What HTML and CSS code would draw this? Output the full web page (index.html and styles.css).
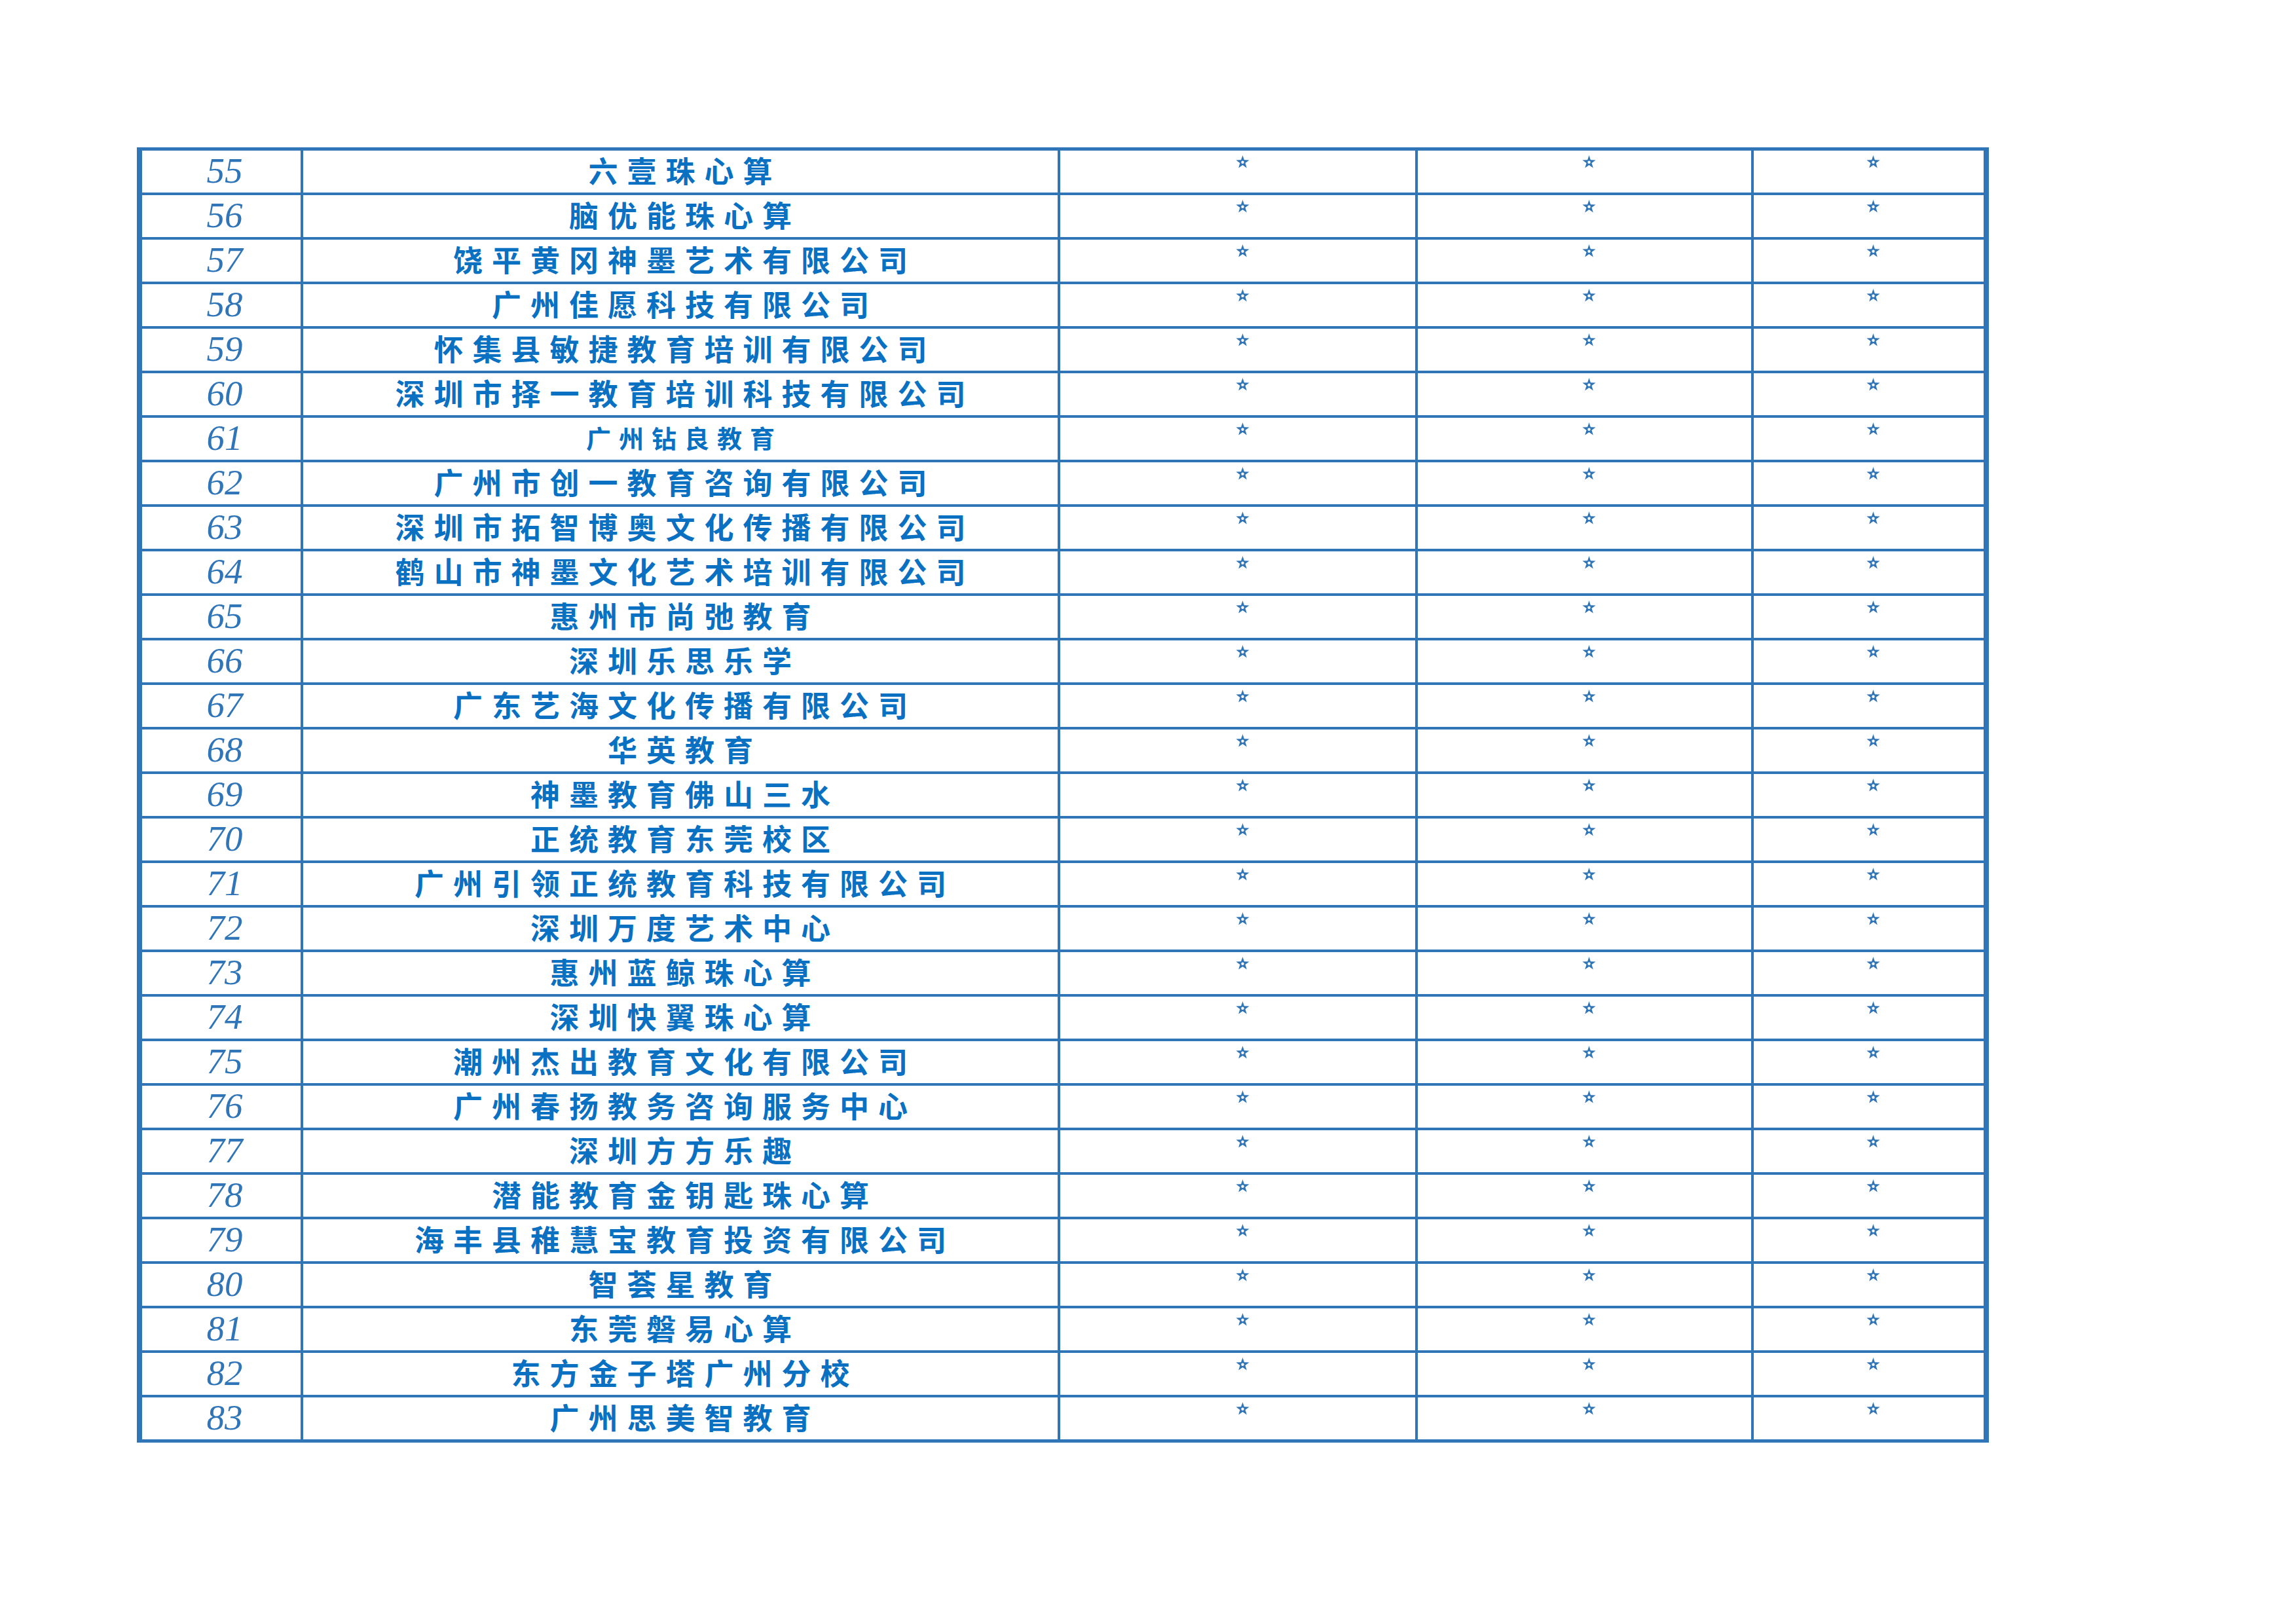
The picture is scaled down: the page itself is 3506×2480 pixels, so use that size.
FILE: index.html
```html
<!DOCTYPE html>
<html lang="zh-CN">
<head>
<meta charset="utf-8">
<title>名单</title>
<link rel="stylesheet" href="styles.css">
</head>
<body>
<svg class="defs" width="0" height="0" aria-hidden="true">
  <symbol id="star" viewBox="0 0 21 20">
    <path fill-rule="evenodd" d="M10.5 0.2 L12.9 7.2 L20.6 7.4 L14.5 12 L16.8 19.6 L10.5 15 L4.2 19.6 L6.5 12 L0.4 7.4 L8.1 7.2 Z M10.5 8.6 A2.2 2.2 0 1 0 10.5 13 A2.2 2.2 0 1 0 10.5 8.6 Z"/>
  </symbol>
</svg>
<div class="page">
<table class="list">
  <colgroup>
    <col class="c-no"><col class="c-name"><col class="c-a"><col class="c-b"><col class="c-c">
  </colgroup>
  <tbody>
    <tr><td class="no">55</td><td class="name">六壹珠心算</td><td class="mark"><svg class="star"><use href="#star"/></svg></td><td class="mark"><svg class="star"><use href="#star"/></svg></td><td class="mark"><svg class="star"><use href="#star"/></svg></td></tr>
    <tr><td class="no">56</td><td class="name">脑优能珠心算</td><td class="mark"><svg class="star"><use href="#star"/></svg></td><td class="mark"><svg class="star"><use href="#star"/></svg></td><td class="mark"><svg class="star"><use href="#star"/></svg></td></tr>
    <tr><td class="no">57</td><td class="name">饶平黄冈神墨艺术有限公司</td><td class="mark"><svg class="star"><use href="#star"/></svg></td><td class="mark"><svg class="star"><use href="#star"/></svg></td><td class="mark"><svg class="star"><use href="#star"/></svg></td></tr>
    <tr><td class="no">58</td><td class="name">广州佳愿科技有限公司</td><td class="mark"><svg class="star"><use href="#star"/></svg></td><td class="mark"><svg class="star"><use href="#star"/></svg></td><td class="mark"><svg class="star"><use href="#star"/></svg></td></tr>
    <tr><td class="no">59</td><td class="name">怀集县敏捷教育培训有限公司</td><td class="mark"><svg class="star"><use href="#star"/></svg></td><td class="mark"><svg class="star"><use href="#star"/></svg></td><td class="mark"><svg class="star"><use href="#star"/></svg></td></tr>
    <tr><td class="no">60</td><td class="name">深圳市择一教育培训科技有限公司</td><td class="mark"><svg class="star"><use href="#star"/></svg></td><td class="mark"><svg class="star"><use href="#star"/></svg></td><td class="mark"><svg class="star"><use href="#star"/></svg></td></tr>
    <tr><td class="no">61</td><td class="name small">广州钻良教育</td><td class="mark"><svg class="star"><use href="#star"/></svg></td><td class="mark"><svg class="star"><use href="#star"/></svg></td><td class="mark"><svg class="star"><use href="#star"/></svg></td></tr>
    <tr><td class="no">62</td><td class="name">广州市创一教育咨询有限公司</td><td class="mark"><svg class="star"><use href="#star"/></svg></td><td class="mark"><svg class="star"><use href="#star"/></svg></td><td class="mark"><svg class="star"><use href="#star"/></svg></td></tr>
    <tr><td class="no">63</td><td class="name">深圳市拓智博奥文化传播有限公司</td><td class="mark"><svg class="star"><use href="#star"/></svg></td><td class="mark"><svg class="star"><use href="#star"/></svg></td><td class="mark"><svg class="star"><use href="#star"/></svg></td></tr>
    <tr><td class="no">64</td><td class="name">鹤山市神墨文化艺术培训有限公司</td><td class="mark"><svg class="star"><use href="#star"/></svg></td><td class="mark"><svg class="star"><use href="#star"/></svg></td><td class="mark"><svg class="star"><use href="#star"/></svg></td></tr>
    <tr><td class="no">65</td><td class="name">惠州市尚弛教育</td><td class="mark"><svg class="star"><use href="#star"/></svg></td><td class="mark"><svg class="star"><use href="#star"/></svg></td><td class="mark"><svg class="star"><use href="#star"/></svg></td></tr>
    <tr><td class="no">66</td><td class="name">深圳乐思乐学</td><td class="mark"><svg class="star"><use href="#star"/></svg></td><td class="mark"><svg class="star"><use href="#star"/></svg></td><td class="mark"><svg class="star"><use href="#star"/></svg></td></tr>
    <tr><td class="no">67</td><td class="name">广东艺海文化传播有限公司</td><td class="mark"><svg class="star"><use href="#star"/></svg></td><td class="mark"><svg class="star"><use href="#star"/></svg></td><td class="mark"><svg class="star"><use href="#star"/></svg></td></tr>
    <tr><td class="no">68</td><td class="name">华英教育</td><td class="mark"><svg class="star"><use href="#star"/></svg></td><td class="mark"><svg class="star"><use href="#star"/></svg></td><td class="mark"><svg class="star"><use href="#star"/></svg></td></tr>
    <tr><td class="no">69</td><td class="name">神墨教育佛山三水</td><td class="mark"><svg class="star"><use href="#star"/></svg></td><td class="mark"><svg class="star"><use href="#star"/></svg></td><td class="mark"><svg class="star"><use href="#star"/></svg></td></tr>
    <tr><td class="no">70</td><td class="name">正统教育东莞校区</td><td class="mark"><svg class="star"><use href="#star"/></svg></td><td class="mark"><svg class="star"><use href="#star"/></svg></td><td class="mark"><svg class="star"><use href="#star"/></svg></td></tr>
    <tr><td class="no">71</td><td class="name">广州引领正统教育科技有限公司</td><td class="mark"><svg class="star"><use href="#star"/></svg></td><td class="mark"><svg class="star"><use href="#star"/></svg></td><td class="mark"><svg class="star"><use href="#star"/></svg></td></tr>
    <tr><td class="no">72</td><td class="name">深圳万度艺术中心</td><td class="mark"><svg class="star"><use href="#star"/></svg></td><td class="mark"><svg class="star"><use href="#star"/></svg></td><td class="mark"><svg class="star"><use href="#star"/></svg></td></tr>
    <tr><td class="no">73</td><td class="name">惠州蓝鲸珠心算</td><td class="mark"><svg class="star"><use href="#star"/></svg></td><td class="mark"><svg class="star"><use href="#star"/></svg></td><td class="mark"><svg class="star"><use href="#star"/></svg></td></tr>
    <tr><td class="no">74</td><td class="name">深圳快翼珠心算</td><td class="mark"><svg class="star"><use href="#star"/></svg></td><td class="mark"><svg class="star"><use href="#star"/></svg></td><td class="mark"><svg class="star"><use href="#star"/></svg></td></tr>
    <tr><td class="no">75</td><td class="name">潮州杰出教育文化有限公司</td><td class="mark"><svg class="star"><use href="#star"/></svg></td><td class="mark"><svg class="star"><use href="#star"/></svg></td><td class="mark"><svg class="star"><use href="#star"/></svg></td></tr>
    <tr><td class="no">76</td><td class="name">广州春扬教务咨询服务中心</td><td class="mark"><svg class="star"><use href="#star"/></svg></td><td class="mark"><svg class="star"><use href="#star"/></svg></td><td class="mark"><svg class="star"><use href="#star"/></svg></td></tr>
    <tr><td class="no">77</td><td class="name">深圳方方乐趣</td><td class="mark"><svg class="star"><use href="#star"/></svg></td><td class="mark"><svg class="star"><use href="#star"/></svg></td><td class="mark"><svg class="star"><use href="#star"/></svg></td></tr>
    <tr><td class="no">78</td><td class="name">潜能教育金钥匙珠心算</td><td class="mark"><svg class="star"><use href="#star"/></svg></td><td class="mark"><svg class="star"><use href="#star"/></svg></td><td class="mark"><svg class="star"><use href="#star"/></svg></td></tr>
    <tr><td class="no">79</td><td class="name">海丰县稚慧宝教育投资有限公司</td><td class="mark"><svg class="star"><use href="#star"/></svg></td><td class="mark"><svg class="star"><use href="#star"/></svg></td><td class="mark"><svg class="star"><use href="#star"/></svg></td></tr>
    <tr><td class="no">80</td><td class="name">智荟星教育</td><td class="mark"><svg class="star"><use href="#star"/></svg></td><td class="mark"><svg class="star"><use href="#star"/></svg></td><td class="mark"><svg class="star"><use href="#star"/></svg></td></tr>
    <tr><td class="no">81</td><td class="name">东莞磐易心算</td><td class="mark"><svg class="star"><use href="#star"/></svg></td><td class="mark"><svg class="star"><use href="#star"/></svg></td><td class="mark"><svg class="star"><use href="#star"/></svg></td></tr>
    <tr><td class="no">82</td><td class="name">东方金子塔广州分校</td><td class="mark"><svg class="star"><use href="#star"/></svg></td><td class="mark"><svg class="star"><use href="#star"/></svg></td><td class="mark"><svg class="star"><use href="#star"/></svg></td></tr>
    <tr class="last"><td class="no">83</td><td class="name">广州思美智教育</td><td class="mark"><svg class="star"><use href="#star"/></svg></td><td class="mark"><svg class="star"><use href="#star"/></svg></td><td class="mark"><svg class="star"><use href="#star"/></svg></td></tr>
  </tbody>
</table>
</div>
</body>
</html>
```
FILE: styles.css
```css
html, body {
  margin: 0;
  padding: 0;
  background: #ffffff;
}

.defs {
  position: absolute;
  width: 0;
  height: 0;
  overflow: hidden;
}

.page {
  padding: 225px 0 0 209px;
}

.list {
  border-collapse: separate;
  border-spacing: 0;
  table-layout: fixed;
  width: 2828px;
  border-left: 8px solid #2f75b7;
  border-top: 5px solid #2f75b7;
}

.c-no { width: 246px; }
.c-name { width: 1156px; }
.c-a { width: 546px; }
.c-b { width: 513px; }
.c-c { width: 359px; }

.list td {
  box-sizing: border-box;
  height: 68px;
  padding: 0;
  border-right: 4px solid #2f75b7;
  border-bottom: 4px solid #2f75b7;
  text-align: center;
  vertical-align: middle;
  white-space: nowrap;
}

.list td:last-child {
  border-right-width: 8px;
}

.list tr.last td {
  height: 69px;
  border-bottom-width: 5px;
}

.list td.no {
  font-family: "Liberation Serif", "Times New Roman", serif;
  font-style: italic;
  font-size: 55px;
  line-height: 60px;
  color: #2f75b7;
  padding: 0 0 3px 10px;
}

.list td.name {
  font-family: "Noto Sans CJK SC", "Noto Sans", sans-serif;
  font-weight: 700;
  font-size: 45px;
  line-height: 60px;
  letter-spacing: 14px;
  color: #0a70c2;
  padding: 0 0 4px 14px;
}

.list td.name.small {
  font-size: 38px;
  letter-spacing: 12px;
  padding: 0 0 4px 12px;
}

.list td.mark {
  vertical-align: top;
  padding: 7px 0 0 14px;
  line-height: 0;
}

.star {
  width: 21px;
  height: 20px;
  fill: #2f75b7;
}
```
